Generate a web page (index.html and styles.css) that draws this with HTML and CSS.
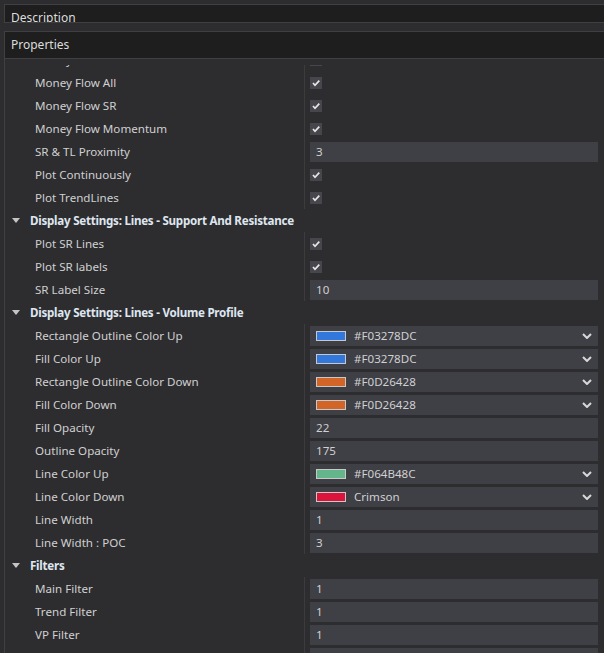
FILE: index.html
```html
<!DOCTYPE html>
<html lang="en">
<head>
    <meta charset="UTF-8">
    <title>Properties</title>
    <link rel="stylesheet" href="styles.css">
</head>
<body>
    <div class="wrap">
        <div class="box desc">Description</div>
        <div class="box props-head">Properties</div>
        <div class="props">
            <div class="viewport">
                <div class="list">
                    <div class="row"><div class="name">Money Flow Trend</div><div class="value"><span class="check"><svg viewBox="0 0 12 12"><path d="M3 6 L5 8.3 L9.3 3.6"/></svg></span></div></div>
                    <div class="row"><div class="name">Money Flow All</div><div class="value"><span class="check"><svg viewBox="0 0 12 12"><path d="M3 6 L5 8.3 L9.3 3.6"/></svg></span></div></div>
                    <div class="row"><div class="name">Money Flow SR</div><div class="value"><span class="check"><svg viewBox="0 0 12 12"><path d="M3 6 L5 8.3 L9.3 3.6"/></svg></span></div></div>
                    <div class="row"><div class="name">Money Flow Momentum</div><div class="value"><span class="check"><svg viewBox="0 0 12 12"><path d="M3 6 L5 8.3 L9.3 3.6"/></svg></span></div></div>
                    <div class="row"><div class="name">SR &amp; TL Proximity</div><div class="value"><div class="field">3</div></div></div>
                    <div class="row"><div class="name">Plot Continuously</div><div class="value"><span class="check"><svg viewBox="0 0 12 12"><path d="M3 6 L5 8.3 L9.3 3.6"/></svg></span></div></div>
                    <div class="row"><div class="name">Plot TrendLines</div><div class="value"><span class="check"><svg viewBox="0 0 12 12"><path d="M3 6 L5 8.3 L9.3 3.6"/></svg></span></div></div>

                    <div class="row cat"><span class="arrow"></span>Display Settings: Lines - Support And Resistance</div>
                    <div class="row"><div class="name">Plot SR Lines</div><div class="value"><span class="check"><svg viewBox="0 0 12 12"><path d="M3 6 L5 8.3 L9.3 3.6"/></svg></span></div></div>
                    <div class="row"><div class="name">Plot SR labels</div><div class="value"><span class="check"><svg viewBox="0 0 12 12"><path d="M3 6 L5 8.3 L9.3 3.6"/></svg></span></div></div>
                    <div class="row"><div class="name">SR Label Size</div><div class="value"><div class="field">10</div></div></div>

                    <div class="row cat"><span class="arrow"></span>Display Settings: Lines - Volume Profile</div>
                    <div class="row"><div class="name">Rectangle Outline Color Up</div><div class="value"><div class="field pick"><span class="swatch blue"></span><span class="pick-text">#F03278DC</span><svg class="chev" viewBox="0 0 10 6"><path d="M1 1 L5 5 L9 1"/></svg></div></div></div>
                    <div class="row"><div class="name">Fill Color Up</div><div class="value"><div class="field pick"><span class="swatch blue"></span><span class="pick-text">#F03278DC</span><svg class="chev" viewBox="0 0 10 6"><path d="M1 1 L5 5 L9 1"/></svg></div></div></div>
                    <div class="row"><div class="name">Rectangle Outline Color Down</div><div class="value"><div class="field pick"><span class="swatch orange"></span><span class="pick-text">#F0D26428</span><svg class="chev" viewBox="0 0 10 6"><path d="M1 1 L5 5 L9 1"/></svg></div></div></div>
                    <div class="row"><div class="name">Fill Color Down</div><div class="value"><div class="field pick"><span class="swatch orange"></span><span class="pick-text">#F0D26428</span><svg class="chev" viewBox="0 0 10 6"><path d="M1 1 L5 5 L9 1"/></svg></div></div></div>
                    <div class="row"><div class="name">Fill Opacity</div><div class="value"><div class="field">22</div></div></div>
                    <div class="row"><div class="name">Outline Opacity</div><div class="value"><div class="field">175</div></div></div>
                    <div class="row"><div class="name">Line Color Up</div><div class="value"><div class="field pick"><span class="swatch green"></span><span class="pick-text">#F064B48C</span><svg class="chev" viewBox="0 0 10 6"><path d="M1 1 L5 5 L9 1"/></svg></div></div></div>
                    <div class="row"><div class="name">Line Color Down</div><div class="value"><div class="field pick"><span class="swatch crimson"></span><span class="pick-text">Crimson</span><svg class="chev" viewBox="0 0 10 6"><path d="M1 1 L5 5 L9 1"/></svg></div></div></div>
                    <div class="row"><div class="name">Line Width</div><div class="value"><div class="field">1</div></div></div>
                    <div class="row"><div class="name">Line Width : POC</div><div class="value"><div class="field">3</div></div></div>

                    <div class="row cat"><span class="arrow"></span>Filters</div>
                    <div class="row"><div class="name">Main Filter</div><div class="value"><div class="field">1</div></div></div>
                    <div class="row"><div class="name">Trend Filter</div><div class="value"><div class="field">1</div></div></div>
                    <div class="row"><div class="name">VP Filter</div><div class="value"><div class="field">1</div></div></div>
                    <div class="row"><div class="name">SR Filter</div><div class="value"><div class="field">1</div></div></div>
                </div>
            </div>
        </div>
    </div>
</body>
</html>
```

FILE: styles.css
```css
body {
    margin: 0;
    height: 653px;
    overflow: hidden;
    background: #2d2d30;
    font-family: "Noto Sans", "Segoe UI", sans-serif;
    font-size: 11.6px;
    color: #d0d0d0;
}

.wrap {
    padding: 4px 0 0 4px;
}

.box {
    background: #1e1e1e;
    border: 1px solid #3f3f44;
    border-right: 0;
    padding-left: 6px;
    color: #dcdcdc;
    font-size: 12px;
    overflow: hidden;
}

.desc {
    box-sizing: border-box;
    height: 19px;
    line-height: 16px;
    padding-top: 5px;
    margin-bottom: 8px;
}

.props-head {
    height: 26px;
    line-height: 26px;
}

.props {
    border-left: 1px solid #3f3f44;
    padding-top: 6px;
}

.viewport {
    height: 600px;
    overflow: hidden;
}

.list {
    margin-top: -17px;
}

.row {
    display: grid;
    grid-template-columns: 299px 1fr;
    height: 23px;
    align-items: center;
}

.name {
    padding-left: 30px;
    white-space: nowrap;
}

.value {
    align-self: stretch;
    display: flex;
    align-items: center;
    border-left: 1px solid #3c3c40;
    padding: 0 6px 0 5px;
}

.row.cat {
    display: flex;
    padding-left: 7px;
    font-weight: bold;
    letter-spacing: -0.25px;
    color: #dfe6ef;
}

.arrow {
    width: 0;
    height: 0;
    border-left: 4.5px solid transparent;
    border-right: 4.5px solid transparent;
    border-top: 5px solid #c4c4c4;
    margin-right: 10px;
}

.check {
    width: 12px;
    height: 12px;
    background: #46464c;
    display: block;
}

.check svg {
    display: block;
    width: 12px;
    height: 12px;
    fill: none;
    stroke: #e6e6e6;
    stroke-width: 1.7;
}

.field {
    flex: 1;
    height: 20px;
    line-height: 20px;
    background: #3f3f46;
    padding-left: 6px;
    color: #d0d0d0;
}

.pick {
    display: flex;
    align-items: center;
}

.swatch {
    width: 28px;
    height: 8px;
    border: 1px solid #c8c8c8;
    margin-right: 8px;
}

.blue { background: #3278dc; }
.orange { background: #d26428; }
.green { background: #64b48c; }
.crimson { background: #dc143c; }

.pick-text {
    flex: 1;
}

.chev {
    width: 10px;
    height: 6px;
    margin-right: 6px;
    fill: none;
    stroke: #d8d8d8;
    stroke-width: 2;
}
```
